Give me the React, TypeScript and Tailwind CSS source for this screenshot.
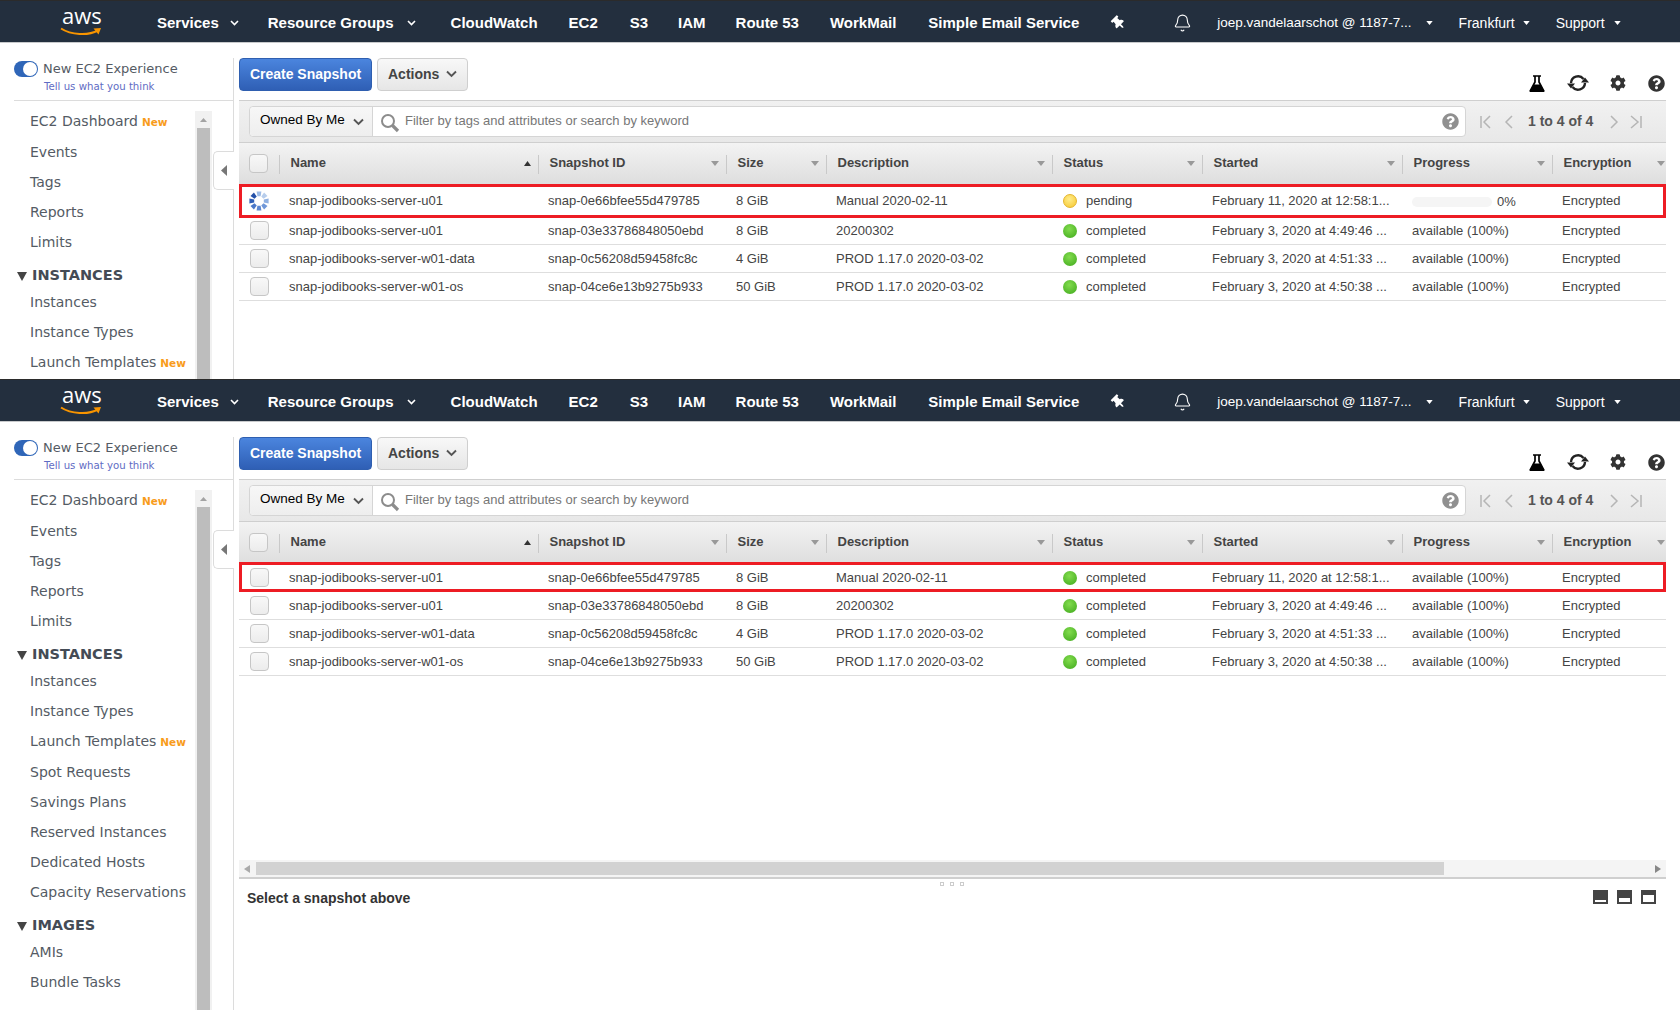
import { Bell } from 'lucide-react';
import { FaCog, FaQuestionCircle, FaThumbtack } from 'react-icons/fa';

const navLinks = ['CloudWatch', 'EC2', 'S3', 'IAM', 'Route 53', 'WorkMail', 'Simple Email Service'];
const navGaps = ['ml-[35px]', 'ml-[31px]', 'ml-[32px]', 'ml-[30px]', 'ml-[30px]', 'ml-[31px]', 'ml-[32px]'];

const colClass = 'grid grid-cols-[40px_259px_188px_100px_226px_150px_200px_150px_114px]';

const columns = ['Snapshot ID', 'Size', 'Description', 'Status', 'Started', 'Progress', 'Encryption'];

const snapshots = [
  { name: 'snap-jodibooks-server-u01', id: 'snap-0e66bfee55d479785', size: '8 GiB', desc: 'Manual 2020-02-11', started: 'February 11, 2020 at 12:58:1...' },
  { name: 'snap-jodibooks-server-u01', id: 'snap-03e33786848050ebd', size: '8 GiB', desc: '20200302', started: 'February 3, 2020 at 4:49:46 ...' },
  { name: 'snap-jodibooks-server-w01-data', id: 'snap-0c56208d59458fc8c', size: '4 GiB', desc: 'PROD 1.17.0 2020-03-02', started: 'February 3, 2020 at 4:51:33 ...' },
  { name: 'snap-jodibooks-server-w01-os', id: 'snap-04ce6e13b9275b933', size: '50 GiB', desc: 'PROD 1.17.0 2020-03-02', started: 'February 3, 2020 at 4:50:38 ...' },
];

function Caret({ className }: { className: string }) {
  return (
    <svg width="8" height="5" viewBox="0 0 8 5" className={className}>
      <path d="M0 0h8L4 5z" fill="currentColor" />
    </svg>
  );
}

function NavChevron() {
  return (
    <svg width="9" height="6" viewBox="0 0 9 6" className="text-white">
      <path d="M1 1l3.5 3.5L8 1" fill="none" stroke="currentColor" strokeWidth="1.6" />
    </svg>
  );
}

function GrayChevron({ className }: { className: string }) {
  return (
    <svg width="11" height="8" viewBox="0 0 11 8" className={className}>
      <path d="M1 1.5l4.5 4.5L10 1.5" fill="none" stroke="#555" strokeWidth="1.9" />
    </svg>
  );
}

function AwsLogo() {
  return (
    <div className="relative w-[42px] h-[28px] ml-[60px] -mt-[3px] shrink-0">
      <span className="absolute left-[2px] top-[-8px] text-[22px] leading-[30px] text-white font-['Open_Sans',sans-serif]">aws</span>
      <svg width="42" height="10" viewBox="0 0 42 10" className="absolute left-0 top-[19px]">
        <path d="M1 1.5C11 8 28 9 38 3.5" fill="none" stroke="#f79400" strokeWidth="2" />
        <path d="M33.5 1.5L41 1l-2.5 6.5z" fill="#f79400" />
      </svg>
    </div>
  );
}

function TopNav() {
  return (
    <div className="h-[43px] shrink-0 flex items-center pt-[3px] bg-[#232f3e] border-t border-[#2b2b2b] border-b border-b-[#c8cacc] text-white">
      <AwsLogo />
      <span className="ml-[55px] text-[15px] font-bold">Services</span>
      <span className="ml-[11px]"><NavChevron /></span>
      <span className="ml-[29px] text-[15px] font-bold">Resource Groups</span>
      <span className="ml-[13px]"><NavChevron /></span>
      {navLinks.map((link, i) => (
        <span key={link} className={`${navGaps[i]} text-[15px] font-bold whitespace-nowrap`}>{link}</span>
      ))}
      <FaThumbtack className="ml-[33px] w-[13px] h-[14px] -rotate-45" />
      <Bell className="ml-[48px] w-[19px] h-[20px]" strokeWidth={1.4} />
      <span className="ml-[25px] text-[13.5px] whitespace-nowrap">joep.vandelaarschot @ 1187-7...</span>
      <Caret className="ml-[14px] w-[7px] h-[4px]" />
      <span className="ml-[26px] text-[14px]">Frankfurt</span>
      <Caret className="ml-[8px] w-[7px] h-[4px]" />
      <span className="ml-[26px] text-[14px]">Support</span>
      <Caret className="ml-[9px] w-[7px] h-[4px]" />
    </div>
  );
}

function NavItem({ label, badge, className }: { label: string; badge?: boolean; className: string }) {
  return (
    <div className={`${className} flex items-center pl-[30px] whitespace-nowrap text-[#545b64] text-[14px]`}>
      {label}
      {badge && <span className="ml-[4px] mt-[2px] text-[10.5px] font-bold text-[#f89c1c]">New</span>}
    </div>
  );
}

function NavSection({ label }: { label: string }) {
  return (
    <div className="h-[30px] flex items-end pl-[17px] text-[#444b55] text-[14.5px] font-bold">
      <svg width="10" height="9" viewBox="0 0 10 9" className="mb-[6px] mr-[5px]">
        <path d="M0 0h10L5 9z" fill="#444" />
      </svg>
      {label}
    </div>
  );
}

function Sidebar() {
  return (
    <div className="w-[234px] shrink-0 mt-[15px] flex flex-col border-r border-[#dcdcdc] font-['DejaVu_Sans',sans-serif]">
      <div className="h-[43px] shrink-0 ml-[14px] pt-[3px] border-b border-[#dcdcdc] flex">
        <div className="relative w-[24px] h-[16px] rounded-full bg-[#2f66b8] shrink-0">
          <div className="absolute right-[1px] top-[1px] w-[14px] h-[14px] rounded-full bg-white" />
        </div>
        <div className="ml-[5px]">
          <div className="text-[13px] leading-[16px] text-[#545b64] whitespace-nowrap">New EC2 Experience</div>
          <div className="mt-[3px] ml-px text-[10.2px] leading-[14px] text-[#5f6cc4] whitespace-nowrap">Tell us what you think</div>
        </div>
      </div>
      <div className="flex-1 min-h-0 flex overflow-hidden">
        <div className="w-[195px] shrink-0 pt-[5px]">
          <NavItem label="EC2 Dashboard" badge className="h-[31px]" />
          <NavItem label="Events" className="h-[30px]" />
          <NavItem label="Tags" className="h-[30px]" />
          <NavItem label="Reports" className="h-[30px]" />
          <NavItem label="Limits" className="h-[30px]" />
          <NavSection label="INSTANCES" />
          <NavItem label="Instances" className="h-[30px]" />
          <NavItem label="Instance Types" className="h-[30px]" />
          <NavItem label="Launch Templates" badge className="h-[31px]" />
          <NavItem label="Spot Requests" className="h-[30px]" />
          <NavItem label="Savings Plans" className="h-[30px]" />
          <NavItem label="Reserved Instances" className="h-[30px]" />
          <NavItem label="Dedicated Hosts" className="h-[30px]" />
          <NavItem label="Capacity Reservations" className="h-[30px]" />
          <NavSection label="IMAGES" />
          <NavItem label="AMIs" className="h-[30px]" />
          <NavItem label="Bundle Tasks" className="h-[30px]" />
        </div>
        <div className="w-[17px] shrink-0 mt-[10px] bg-[#f1f1f1] flex flex-col items-center">
          <div className="h-[17px] shrink-0 flex items-center justify-center">
            <svg width="7" height="4" viewBox="0 0 7 4"><path d="M0 4h7L3.5 0z" fill="#a3a3a3" /></svg>
          </div>
          <div className="w-[13px] flex-1 bg-[#bdbdbd]" />
        </div>
      </div>
    </div>
  );
}

function Checkbox({ className = '' }: { className?: string }) {
  return <div className={`w-[19px] h-[19px] rounded-[4px] border border-[#c6c6c6] bg-gradient-to-b from-[#f8f8f8] to-[#ececec] ${className}`} />;
}

function Spinner() {
  const shades = ['#9dbbe6', '#b7cdec', '#8fb0e2', '#6f97d8', '#5c87d0', '#4a78c9', '#2f5fb8', '#2450a8'];
  return (
    <svg width="20" height="20" viewBox="0 0 20 20" className="ml-[10px]">
      {shades.map((c, i) => (
        <path key={i} d="M7.6 0.4h4.8L11.6 5.2H8.4z" fill={c} transform={`rotate(${i * 45} 10 10)`} />
      ))}
    </svg>
  );
}

function HeaderCell({ label, sorted, last }: { label: string; sorted?: boolean; last?: boolean }) {
  return (
    <div className={`relative flex items-center pl-[11.5px] justify-between ${last ? 'pr-px' : 'pr-[7px]'}`}>
      <div className="absolute left-0 top-[12px] w-px h-[19px] bg-[#c9c9c9]" />
      <span className="text-[13px] font-bold text-[#444] -mt-[1px]">{label}</span>
      {sorted ? (
        <svg width="7" height="5" viewBox="0 0 7 5"><path d="M0 5h7L3.5 0z" fill="#333" /></svg>
      ) : (
        <Caret className="w-[8px] h-[5px] text-[#999]" />
      )}
    </div>
  );
}

function StatusDot({ pending }: { pending: boolean }) {
  return (
    <span
      className={`w-[14px] h-[14px] rounded-full shrink-0 ${
        pending
          ? 'bg-[radial-gradient(circle_at_45%_35%,#ffec8a,#f6c72f)] border border-[#e4b52c]'
          : 'bg-[radial-gradient(circle_at_45%_35%,#82dc4e,#3fa81c)]'
      }`}
    />
  );
}

function Row({ snap, index, pending, tall, first }: { snap: (typeof snapshots)[number]; index: number; pending: boolean; tall: boolean; first: boolean }) {
  const isPending = pending && index === 0;
  return (
    <div className={`relative ${colClass} ${tall ? 'h-[33px]' : first ? 'h-[29px]' : 'h-[28px]'} ${first ? '' : 'border-b border-[#dedede]'} text-[13px] text-[#444] whitespace-nowrap`}>
      {first && <div className={`absolute inset-x-0 ${tall ? 'top-0 -bottom-px' : '-top-px bottom-0'} border-[3px] border-[#ed1c24] z-10`} />}
      <div className="flex items-center">{isPending ? <Spinner /> : <Checkbox className="ml-[11px]" />}</div>
      <div className="flex items-center pl-[10px]">{snap.name}</div>
      <div className="flex items-center pl-[10px]">{snap.id}</div>
      <div className="flex items-center pl-[10px]">{snap.size}</div>
      <div className="flex items-center pl-[10px]">{snap.desc}</div>
      <div className="flex items-center pl-[11px] gap-[9px]">
        <StatusDot pending={isPending} />
        {isPending ? 'pending' : 'completed'}
      </div>
      <div className="flex items-center pl-[10px]">{snap.started}</div>
      <div className="flex items-center pl-[10px]">
        {isPending ? (
          <>
            <div className="w-[80px] h-[10px] mt-[2px] rounded-full bg-[#f5f5f5]" />
            <span className="ml-[5px] mt-[3px]">0%</span>
          </>
        ) : (
          'available (100%)'
        )}
      </div>
      <div className="flex items-center pl-[10px]">Encrypted</div>
    </div>
  );
}

function PageArrow({ d }: { d: string }) {
  return (
    <svg width="12" height="14" viewBox="0 0 12 14">
      <path d={d} fill="none" stroke="#b5b5b5" strokeWidth="1.5" />
    </svg>
  );
}

function Snapshots({ pending, full }: { pending: boolean; full: boolean }) {
  return (
    <div className="flex-1 min-w-0 ml-[5px] mr-[14px] flex flex-col font-['Liberation_Sans',sans-serif]">
      {/* Actions */}
      <div className="h-[57px] shrink-0 pt-[15px] flex justify-between">
        <div className="flex gap-[5px] h-[33px]">
          <div className="w-[133px] rounded-[4px] border border-[#2f5fb0] bg-gradient-to-b from-[#4b85de] to-[#2f5fb5] flex items-center justify-center text-[14px] font-bold text-white">
            Create Snapshot
          </div>
          <div className="w-[91px] rounded-[4px] border border-[#cfcfcf] bg-gradient-to-b from-[#f8f8f8] to-[#e6e6e6] flex items-center pl-[10px] text-[14px] font-bold text-[#444]">
            Actions
            <GrayChevron className="ml-[7px] -mt-[2px]" />
          </div>
        </div>
        <div className="flex items-center h-[18px] mt-[16px] pr-px text-black">
          <svg width="16" height="17" viewBox="0 0 16 17">
            <path d="M4 1h8M6 1v6L1.5 15.5h13L10 7V1" fill="none" stroke="#000" strokeWidth="1.7" />
            <path d="M4.6 9.5h6.8L15.5 17H.5z" fill="#000" />
          </svg>
          <svg width="22" height="18" viewBox="0 0 22 18" className="ml-[22px]">
            <path d="M4 9a7 7 0 0 1 12.5-4M18 9a7 7 0 0 1-12.5 4" fill="none" stroke="#222" strokeWidth="2.4" />
            <path d="M14 8.5h8l-4-5zM0 9.5h8l-4 5z" fill="#222" />
          </svg>
          <FaCog className="ml-[21px] w-[16px] h-[16px] text-[#333]" />
          <FaQuestionCircle className="ml-[22px] w-[17px] h-[17px] text-[#333]" />
        </div>
      </div>

      {/* Filter bar */}
      <div className="h-[42px] shrink-0 flex items-center border-t border-[#cfcfcf] bg-gradient-to-b from-[#f1f1f1] to-[#e8e8e8] pl-[10px]">
        <div className="w-[1217px] h-[31px] flex rounded-[4px] border border-[#d5d5d5] bg-white">
          <div className="w-[123px] shrink-0 flex items-center pl-[10px] border-r border-[#d5d5d5] rounded-l-[4px] bg-gradient-to-b from-[#f7f7f7] to-[#eeeeee] text-[13.5px] text-black">
            <span className="-mt-[3px]">Owned By Me</span>
            <GrayChevron className="ml-[8px]" />
          </div>
          <svg width="20" height="20" viewBox="0 0 20 20" className="ml-[7px] mt-[6px]">
            <circle cx="8" cy="8" r="6" fill="none" stroke="#8c8c8c" strokeWidth="2" />
            <path d="M12.5 12.5l5.5 5.5" fill="none" stroke="#8c8c8c" strokeWidth="3.2" />
          </svg>
          <span className="ml-[5px] self-center -mt-[1px] text-[13px] text-[#777] whitespace-nowrap">Filter by tags and attributes or search by keyword</span>
          <FaQuestionCircle className="ml-auto mr-[6px] self-center w-[17px] h-[17px] text-[#909090]" />
        </div>
        <div className="ml-[14px] flex items-center">
          <PageArrow d="M1 1v12M10 1L4 7l6 6" />
          <span className="ml-[11px]"><PageArrow d="M9 1L3 7l6 6" /></span>
          <span className="ml-[13px] text-[14px] font-bold text-[#555] whitespace-nowrap">1 to 4 of 4</span>
          <span className="ml-[15px]"><PageArrow d="M3 1l6 6-6 6" /></span>
          <span className="ml-[10px]"><PageArrow d="M1 1l7 6-7 6M11 1v12" /></span>
        </div>
      </div>

      {/* Table */}
      <div className="flex-1 min-h-0">
        <div className={`${colClass} h-[42px] border-t border-[#cfcfcf] bg-gradient-to-b from-[#f3f3f3] to-[#dedede]`}>
          <div className="flex items-center"><Checkbox className="ml-[10px]" /></div>
          <HeaderCell label="Name" sorted />
          {columns.map((c) => (
            <HeaderCell key={c} label={c} last={c === 'Encryption'} />
          ))}
        </div>
        {snapshots.map((s, i) => (
          <Row key={s.id} snap={s} index={i} pending={pending} tall={pending && i === 0} first={i === 0} />
        ))}
      </div>

      {full && (
        <>
          <div className="h-[17px] shrink-0 bg-[#f4f4f4] flex items-center pl-[5px] pr-[5px]">
            <svg width="6" height="8" viewBox="0 0 6 8"><path d="M6 0v8L0 4z" fill="#aaa" /></svg>
            <div className="ml-[6px] w-[1188px] h-[13px] bg-[#d2d2d2]" />
            <svg width="6" height="8" viewBox="0 0 6 8" className="ml-auto"><path d="M0 0v8l6-4z" fill="#888" /></svg>
          </div>
          <div className="relative h-[133px] shrink-0 border-t-2 border-[#cfcfcf]">
            <div className="absolute left-[701px] top-[3px] flex gap-[6px]">
              <span className="w-[4px] h-[4px] border border-[#ccc]" />
              <span className="w-[4px] h-[4px] border border-[#ccc]" />
              <span className="w-[4px] h-[4px] border border-[#ccc]" />
            </div>
            <div className="flex justify-between pl-[8px] pr-[10px] pt-[11px]">
              <span className="text-[14px] leading-[16px] font-bold text-[#333]">Select a snapshot above</span>
              <div className="flex gap-[9px]">
                <div className="w-[15px] h-[14px] bg-[#444] flex items-end p-[2px]"><div className="w-full h-[2px] bg-white" /></div>
                <div className="w-[15px] h-[14px] bg-[#444] flex items-end p-[2px]"><div className="w-full h-[4px] bg-white" /></div>
                <div className="w-[15px] h-[14px] bg-[#444] flex items-end p-[2px]"><div className="w-full h-[7px] bg-white" /></div>
              </div>
            </div>
          </div>
        </>
      )}
    </div>
  );
}

function Console({ pending, full, className }: { pending: boolean; full: boolean; className: string }) {
  return (
    <div className={`${className} flex flex-col overflow-hidden bg-white font-['Liberation_Sans',sans-serif]`}>
      <TopNav />
      <div className="relative flex-1 min-h-0 flex">
        <Sidebar />
        {/* collapse tab */}
        <div className="absolute left-[213px] top-[108px] w-[21px] h-[39px] bg-white border border-r-0 border-[#dcdcdc] rounded-l-[5px] flex items-center justify-center">
          <svg width="6" height="11" viewBox="0 0 6 11"><path d="M6 0v11L0 5.5z" fill="#777" /></svg>
        </div>
        <Snapshots pending={pending} full={full} />
      </div>
    </div>
  );
}

export default function App() {
  return (
    <div className="w-[1680px] h-[1010px] overflow-hidden flex flex-col bg-white">
      <Console pending full={false} className="h-[379px] shrink-0" />
      <Console pending={false} full className="h-[631px] shrink-0" />
    </div>
  );
}
